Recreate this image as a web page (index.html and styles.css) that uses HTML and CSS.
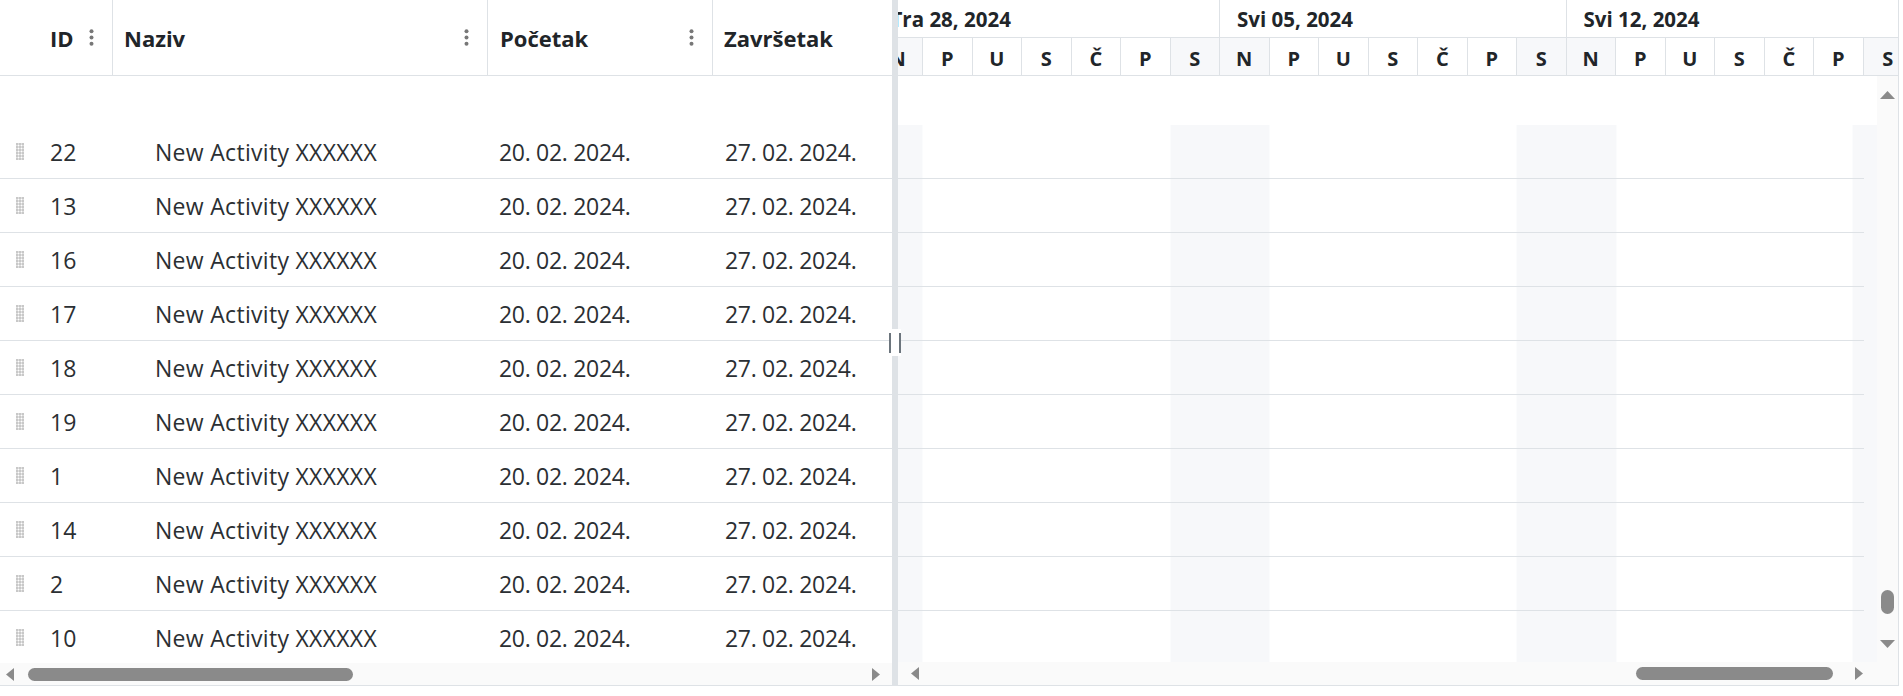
FILE: index.html
```html
<!DOCTYPE html>
<html lang="hr">
<head>
<meta charset="utf-8">
<title>Gantt</title>
<link rel="stylesheet" href="styles.css">
</head>
<body>
<div class="app">
  <section class="grid-pane">
    <header class="grid-head">
      <div class="hcell c-id"><span>ID</span><svg class="kebab" width="5" height="17" viewBox="0 0 5 17"><circle cx="2.5" cy="2.3" r="2"/><circle cx="2.5" cy="8.5" r="2"/><circle cx="2.5" cy="14.7" r="2"/></svg></div>
      <div class="hcell c-name"><span>Naziv</span><svg class="kebab" width="5" height="17" viewBox="0 0 5 17"><circle cx="2.5" cy="2.3" r="2"/><circle cx="2.5" cy="8.5" r="2"/><circle cx="2.5" cy="14.7" r="2"/></svg></div>
      <div class="hcell c-start"><span>Početak</span><svg class="kebab" width="5" height="17" viewBox="0 0 5 17"><circle cx="2.5" cy="2.3" r="2"/><circle cx="2.5" cy="8.5" r="2"/><circle cx="2.5" cy="14.7" r="2"/></svg></div>
      <div class="hcell c-end"><span>Završetak</span><svg class="kebab" width="5" height="17" viewBox="0 0 5 17"><circle cx="2.5" cy="2.3" r="2"/><circle cx="2.5" cy="8.5" r="2"/><circle cx="2.5" cy="14.7" r="2"/></svg></div>
    </header>
    <div class="grid-body">
      <div class="spacer"></div>
      <div class="row"><div class="cell c-id"><span class="handle"></span><span>22</span></div><div class="cell c-name">New Activity XXXXXX</div><div class="cell c-start">20. 02. 2024.</div><div class="cell c-end">27. 02. 2024.</div></div>
      <div class="row"><div class="cell c-id"><span class="handle"></span><span>13</span></div><div class="cell c-name">New Activity XXXXXX</div><div class="cell c-start">20. 02. 2024.</div><div class="cell c-end">27. 02. 2024.</div></div>
      <div class="row"><div class="cell c-id"><span class="handle"></span><span>16</span></div><div class="cell c-name">New Activity XXXXXX</div><div class="cell c-start">20. 02. 2024.</div><div class="cell c-end">27. 02. 2024.</div></div>
      <div class="row"><div class="cell c-id"><span class="handle"></span><span>17</span></div><div class="cell c-name">New Activity XXXXXX</div><div class="cell c-start">20. 02. 2024.</div><div class="cell c-end">27. 02. 2024.</div></div>
      <div class="row"><div class="cell c-id"><span class="handle"></span><span>18</span></div><div class="cell c-name">New Activity XXXXXX</div><div class="cell c-start">20. 02. 2024.</div><div class="cell c-end">27. 02. 2024.</div></div>
      <div class="row"><div class="cell c-id"><span class="handle"></span><span>19</span></div><div class="cell c-name">New Activity XXXXXX</div><div class="cell c-start">20. 02. 2024.</div><div class="cell c-end">27. 02. 2024.</div></div>
      <div class="row"><div class="cell c-id"><span class="handle"></span><span>1</span></div><div class="cell c-name">New Activity XXXXXX</div><div class="cell c-start">20. 02. 2024.</div><div class="cell c-end">27. 02. 2024.</div></div>
      <div class="row"><div class="cell c-id"><span class="handle"></span><span>14</span></div><div class="cell c-name">New Activity XXXXXX</div><div class="cell c-start">20. 02. 2024.</div><div class="cell c-end">27. 02. 2024.</div></div>
      <div class="row"><div class="cell c-id"><span class="handle"></span><span>2</span></div><div class="cell c-name">New Activity XXXXXX</div><div class="cell c-start">20. 02. 2024.</div><div class="cell c-end">27. 02. 2024.</div></div>
      <div class="row"><div class="cell c-id"><span class="handle"></span><span>10</span></div><div class="cell c-name">New Activity XXXXXX</div><div class="cell c-start">20. 02. 2024.</div><div class="cell c-end">27. 02. 2024.</div></div>
    </div>
    <div class="hscroll hs-grid">
      <svg class="arr" width="8" height="13" viewBox="0 0 8 13"><polygon points="8,0 8,13 0,6.5"/></svg>
      <div class="thumb-h"></div>
      <svg class="arr arr-end" width="8" height="13" viewBox="0 0 8 13"><polygon points="0,0 0,13 8,6.5"/></svg>
    </div>
  </section>

  <div class="splitter"><div class="grip"></div></div>

  <section class="gantt-pane">
    <header class="gantt-head">
      <div class="weeks">
        <div class="week">Tra 28, 2024</div>
        <div class="week">Svi 05, 2024</div>
        <div class="week">Svi 12, 2024</div>
      </div>
      <div class="days">
        <div class="day we">N</div><div class="day">P</div><div class="day">U</div><div class="day">S</div><div class="day">Č</div><div class="day">P</div><div class="day we">S</div>
        <div class="day we">N</div><div class="day">P</div><div class="day">U</div><div class="day">S</div><div class="day">Č</div><div class="day">P</div><div class="day we">S</div>
        <div class="day we">N</div><div class="day">P</div><div class="day">U</div><div class="day">S</div><div class="day">Č</div><div class="day">P</div><div class="day we">S</div>
      </div>
    </header>
    <div class="gantt-main">
      <div class="gantt-body">
        <div class="spacer"></div>
        <div class="bars">
          <div class="grow"></div><div class="grow"></div><div class="grow"></div><div class="grow"></div><div class="grow"></div>
          <div class="grow"></div><div class="grow"></div><div class="grow"></div><div class="grow"></div><div class="grow"></div>
        </div>
      </div>
      <div class="vscroll">
        <svg class="varr" width="15" height="8" viewBox="0 0 15 8"><polygon points="0,8 15,8 7.5,0"/></svg>
        <div class="thumb-v"></div>
        <svg class="varr varr-down" width="15" height="8" viewBox="0 0 15 8"><polygon points="0,0 15,0 7.5,8"/></svg>
      </div>
    </div>
    <div class="hscroll hs-gantt">
      <svg class="arr" width="8" height="13" viewBox="0 0 8 13"><polygon points="8,0 8,13 0,6.5"/></svg>
      <div class="thumb-h"></div>
      <svg class="arr arr-end" width="8" height="13" viewBox="0 0 8 13"><polygon points="0,0 0,13 8,6.5"/></svg>
    </div>
  </section>
</div>
</body>
</html>
```

FILE: styles.css
```css
* { box-sizing: border-box; }
html, body { margin: 0; padding: 0; background: #fff; }
body {
  font-family: "Open Sans", "Noto Sans", sans-serif;
  color: #212529;
  width: 1903px;
  height: 696px;
  overflow: hidden;
}
.app {
  display: flex;
  width: 1899px;
  height: 686px;
  border-right: 1px solid #dee2e6;
  border-bottom: 1px solid #dee2e6;
}

/* ---------- left grid ---------- */
.grid-pane {
  width: 892px;
  flex: none;
  display: flex;
  flex-direction: column;
  overflow: hidden;
}
.grid-head {
  height: 76px;
  flex: none;
  display: flex;
  border-bottom: 1px solid #dee2e6;
}
.hcell {
  flex: none;
  display: flex;
  align-items: center;
  justify-content: space-between;
  padding: 0 18px 0 11px;
  border-right: 1px solid #dee2e6;
  font-size: 22px;
  font-weight: 700;
}
.hcell.c-id { width: 113px; padding-left: 50px; }
.hcell.c-name { width: 375px; }
.hcell.c-start { width: 225px; padding-left: 12px; }
.hcell.c-end { width: 225px; padding-left: 11px; }
.kebab { fill: #777; flex: none; }

.grid-body {
  height: 587px;
  flex: none;
  overflow: hidden;
}
.spacer { height: 49px; }
.row {
  height: 54px;
  display: flex;
  align-items: center;
  padding-top: 1px;
  border-bottom: 1px solid #dee2e6;
  font-size: 23px;
  color: #2b2f33;
  white-space: nowrap;
}
.cell { flex: none; }
.cell.c-id { width: 113px; padding-left: 16px; display: flex; align-items: center; }
.cell.c-name { width: 375px; padding-left: 42px; letter-spacing: 0.3px; }
.cell.c-start { width: 225px; padding-left: 11px; letter-spacing: -0.3px; }
.cell.c-end { width: 225px; padding-left: 12px; letter-spacing: -0.3px; }
.handle {
  width: 8px;
  height: 17px;
  margin-right: 26px;
  margin-top: -2px;
  background-image: radial-gradient(circle, #a0a0a0 0.9px, transparent 1.2px);
  background-size: 3px 3px;
  background-position: -0.5px -0.5px;
}

.hscroll {
  flex: none;
  display: flex;
  align-items: center;
  background: #fafafa;
}
.hs-grid { height: 22px; padding-top: 1px; }
.hs-grid .arr:first-child { margin-left: 6px; }
.hs-grid .thumb-h { margin-left: 14px; width: 325px; }
.hs-grid .arr-end { margin-left: auto; margin-right: 12px; }
.arr { fill: #8a8a8a; flex: none; }
.thumb-h { height: 13px; border-radius: 7px; background: #8a8a8a; flex: none; }

/* ---------- splitter ---------- */
.splitter {
  width: 6px;
  flex: none;
  background: #dee2e6;
  display: flex;
  align-items: center;
  justify-content: center;
}
.grip {
  width: 12px;
  height: 27px;
  flex: none;
  background: #fff;
  display: flex;
  align-items: center;
  justify-content: space-between;
  position: relative;
  z-index: 1;
}
.grip::before, .grip::after {
  content: "";
  width: 2px;
  height: 20px;
  background: #6c757d;
}

/* ---------- gantt ---------- */
.gantt-pane {
  flex: 1;
  min-width: 0;
  display: flex;
  flex-direction: column;
  overflow: hidden;
}
.gantt-head { flex: none; height: 76px; border-bottom: 1px solid #dee2e6; overflow: hidden; }
.weeks {
  display: flex;
  height: 38px;
  margin-left: -24.5px;
  border-bottom: 1px solid #dee2e6;
}
.week {
  flex: none;
  width: 346.5px;
  border-right: 1px solid #dee2e6;
  font-size: 20.5px;
  font-weight: 700;
  padding: 5px 0 0 17px;
  white-space: nowrap;
}
.days {
  display: flex;
  height: 37px;
  margin-left: -24.5px;
}
.day {
  flex: none;
  width: 49.5px;
  border-right: 1px solid #dee2e6;
  display: flex;
  align-items: center;
  justify-content: center;
  padding-top: 3px;
  font-size: 20px;
  font-weight: 700;
}
.day.we { background: #f7f8fa; }

.gantt-main { flex: none; height: 586px; display: flex; }
.gantt-body { width: 979px; flex: none; overflow: hidden; }
.bars {
  height: 537px;
  background-image: repeating-linear-gradient(90deg,
    #f7f8fa 0 49.5px, transparent 49.5px 297px, #f7f8fa 297px 346.5px);
  background-position: -24.5px 0;
}
.grow { width: 966px; height: 54px; border-bottom: 1px solid #dee2e6; }

.vscroll {
  width: 21px;
  flex: none;
  background: #fafafa;
  display: flex;
  flex-direction: column;
  align-items: center;
  padding-top: 15px;
}
.varr { fill: #8a8a8a; flex: none; }
.thumb-v { width: 13px; height: 24px; border-radius: 7px; background: #8a8a8a; margin-top: 491px; flex: none; }
.varr-down { margin-top: 26px; }

.hs-gantt { height: 23px; }
.hs-gantt .arr:first-child { margin-left: 13px; }
.hs-gantt .thumb-h { margin-left: 717px; width: 197px; }
.hs-gantt .arr-end { margin-left: 22px; }
```
